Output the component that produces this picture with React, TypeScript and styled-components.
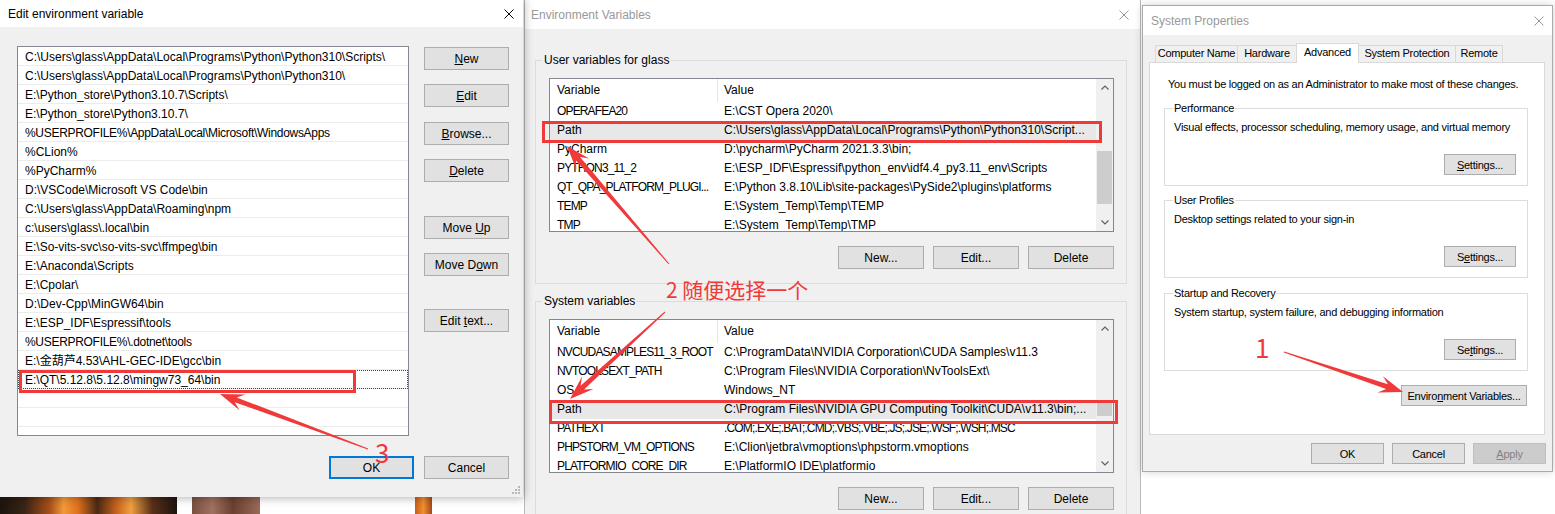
import React from "react";
import styled, { createGlobalStyle, css } from "styled-components";

const FONT = `"Liberation Sans", Arial, "Noto Sans CJK SC", sans-serif`;
const CJK = `"Noto Sans CJK SC", "Liberation Sans", sans-serif`;
const RED = "#f03a3a";

const GlobalStyle = createGlobalStyle`
  * { box-sizing: border-box; }
  html, body { margin: 0; padding: 0; background: #ffffff; }
  body { font-family: ${FONT}; font-size: 12px; color: #000; }
`;

const Desktop = styled.div`
  position: relative;
  width: 1555px;
  height: 514px;
  overflow: hidden;
  background: #ffffff;
  font-family: ${FONT};
  font-size: 12px;
  color: #000;
`;

/* ---------- desktop wallpaper strip under the left dialog ---------- */
const Wallpaper = styled.div`
  position: absolute;
  left: 0;
  top: 497px;
  width: 530px;
  height: 17px;
  display: flex;
`;
const WallPiece = styled.div<{ $w: number; $bg: string }>`
  flex: none;
  width: ${(p) => p.$w}px;
  height: 100%;
  background: ${(p) => p.$bg};
`;

/* ---------- shared window parts ---------- */
const TitleBar = styled.div<{ $h: number; $pl: number; $pr: number; $inactive?: boolean }>`
  flex: none;
  height: ${(p) => p.$h}px;
  background: #ffffff;
  display: flex;
  align-items: center;
  justify-content: space-between;
  padding: 0 ${(p) => p.$pr}px 0 ${(p) => p.$pl}px;
  color: ${(p) => (p.$inactive ? "#999999" : "#000000")};
  font-size: 12px;
  letter-spacing: 0;
`;

const CloseIcon = ({ color }: { color: string }) => (
  <svg width="10" height="10" viewBox="0 0 10 10">
    <path d="M0.5 0.5 L9.5 9.5 M9.5 0.5 L0.5 9.5" stroke={color} strokeWidth="1" fill="none" />
  </svg>
);

const Btn = styled.button<{ $w: number; $h: number; $mt?: number; $primary?: boolean }>`
  flex: none;
  width: ${(p) => p.$w}px;
  height: ${(p) => p.$h}px;
  margin: ${(p) => p.$mt ?? 0}px 0 0 0;
  padding: 0;
  background: #e1e1e1;
  border: 1px solid #adadad;
  font-family: inherit;
  font-size: inherit;
  letter-spacing: inherit;
  color: #000;
  text-align: center;
  white-space: nowrap;
  ${(p) =>
    p.$primary &&
    css`
      border: 2px solid #0078d7;
    `}
  &:disabled {
    background: #cccccc;
    border-color: #bfbfbf;
    color: #838383;
  }
`;

const Mn = styled.span`
  text-decoration: underline;
  text-underline-offset: 1px;
`;

/* ---------- Edit environment variable dialog ---------- */
const EditWindow = styled.div`
  position: absolute;
  left: 0;
  top: 0;
  width: 523px;
  height: 497px;
  z-index: 3;
  display: flex;
  flex-direction: column;
  background: #f0f0f0;
  box-shadow: 0 0 9px 1px rgba(0, 0, 0, 0.3);
`;
const EditBody = styled.div`
  position: relative;
  flex: 1;
  display: flex;
  flex-direction: column;
  padding: 19px 14px 0 17px;
`;
const EditMain = styled.div`
  display: flex;
  align-items: flex-start;
  gap: 15px;
`;
const PathList = styled.div`
  flex: none;
  width: 392px;
  height: 390px;
  border: 1px solid #828790;
  background: #ffffff;
  overflow: hidden;
`;
const PathRow = styled.div<{ $focused?: boolean; $tight?: boolean }>`
  height: 19px;
  padding: 2px 0 0 7px;
  line-height: 16px;
  border-bottom: 1px solid #ececec;
  white-space: nowrap;
  letter-spacing: ${(p) => (p.$tight ? "-0.3px" : "0")};
  ${(p) =>
    p.$focused &&
    css`
      outline: 1px dotted #444;
      outline-offset: -1px;
    `}
`;
const SideButtons = styled.div`
  flex: none;
  width: 85px;
  display: flex;
  flex-direction: column;
  padding-top: 1px;
`;
const EditFooter = styled.div`
  display: flex;
  justify-content: flex-end;
  gap: 10px;
  margin-top: 20px;
`;
const Grip = styled.svg`
  position: absolute;
  right: 3px;
  bottom: 3px;
`;

/* ---------- Environment Variables window ---------- */
const EnvWindow = styled.div`
  position: absolute;
  left: 524px;
  top: -1px;
  width: 617px;
  height: 540px;
  z-index: 1;
  display: flex;
  flex-direction: column;
  background: #f0f0f0;
  border: 1px solid #b9b9b9;
`;
const EnvBody = styled.div`
  flex: 1;
  display: flex;
  flex-direction: column;
  padding-top: 24px;
`;
const EnvGroup = styled.fieldset<{ $mt: number }>`
  min-width: 0;
  margin: ${(p) => p.$mt}px 13px 0 10px;
  padding: 11px 12px 14px 13px;
  border: 1px solid #dcdcdc;
`;
const EnvLegend = styled.legend`
  padding: 0 2px;
  margin-left: -7px;
  line-height: 14px;
  font-size: 12px;
`;
const ListFrame = styled.div`
  height: 154px;
  border: 1px solid #828790;
  background: #ffffff;
  display: flex;
`;
const ListGrid = styled.div`
  flex: 1;
  min-width: 0;
  overflow: hidden;
`;
const ListHeader = styled.div`
  display: flex;
  height: 23px;
`;
const HeadCell = styled.div<{ $w?: number }>`
  ${(p) =>
    p.$w
      ? css`
          flex: none;
          width: ${p.$w}px;
          border-right: 1px solid #e5e5e5;
          padding-left: 7px;
        `
      : css`
          flex: 1;
          padding-left: 6px;
        `}
  line-height: 23px;
  white-space: nowrap;
`;
const VarRow = styled.div<{ $selected?: boolean }>`
  display: flex;
  height: 19px;
  line-height: 19px;
  background: ${(p) => (p.$selected ? "#e8e8e8" : "transparent")};
`;
const VarCell = styled.div<{ $w?: number; $caps?: boolean }>`
  ${(p) =>
    p.$w
      ? css`
          flex: none;
          width: ${p.$w}px;
          padding-left: 7px;
        `
      : css`
          flex: 1;
          padding-left: 6px;
        `}
  letter-spacing: ${(p) => (p.$caps ? "-0.85px" : "0")};
  white-space: nowrap;
  overflow: hidden;
`;
const ScrollBar = styled.div`
  flex: none;
  width: 17px;
  background: #f0f0f0;
  display: flex;
  flex-direction: column;
`;
const ScrollArrow = styled.div`
  flex: none;
  height: 17px;
  display: flex;
  align-items: center;
  justify-content: center;
`;
const ScrollTrack = styled.div`
  flex: 1;
`;
const ScrollThumb = styled.div<{ $top: number; $h: number }>`
  margin: ${(p) => p.$top}px 1px 0;
  height: ${(p) => p.$h}px;
  background: #cdcdcd;
`;
const ButtonRow = styled.div<{ $gap: number; $mt: number; $mr?: number }>`
  display: flex;
  justify-content: flex-end;
  gap: ${(p) => p.$gap}px;
  margin-top: ${(p) => p.$mt}px;
  margin-right: ${(p) => p.$mr ?? 0}px;
`;

/* ---------- System Properties window ---------- */
const SysWindow = styled.div`
  position: absolute;
  left: 1142px;
  top: 5px;
  width: 411px;
  height: 467px;
  z-index: 2;
  display: flex;
  flex-direction: column;
  background: #f0f0f0;
  border: 1px solid #aaaaaa;
  box-shadow: 0 0 8px rgba(0, 0, 0, 0.18);
`;
const SysBody = styled.div`
  flex: 1;
  display: flex;
  flex-direction: column;
  padding: 8px 6px 0 6px;
  font-size: 11px;
  letter-spacing: -0.25px;
`;
const TabStrip = styled.div`
  display: flex;
  align-items: flex-end;
  height: 19px;
  padding-left: 6px;
`;
const Tab = styled.div<{ $w: number; $active?: boolean }>`
  position: relative;
  flex: none;
  width: ${(p) => p.$w}px;
  height: ${(p) => (p.$active ? 20 : 17)}px;
  margin-left: -1px;
  margin-bottom: ${(p) => (p.$active ? -1 : 0)}px;
  z-index: ${(p) => (p.$active ? 1 : 0)};
  border: 1px solid #d9d9d9;
  border-bottom: none;
  background: ${(p) => (p.$active ? "#ffffff" : "#f0f0f0")};
  text-align: center;
  line-height: ${(p) => (p.$active ? 16 : 15)}px;
  white-space: nowrap;
  &:first-child {
    margin-left: 0;
  }
`;
const TabPanel = styled.div`
  flex: none;
  height: 373px;
  margin-right: 1px;
  background: #ffffff;
  border: 1px solid #d9d9d9;
  display: flex;
  flex-direction: column;
  padding: 14px 16px 0 14px;
`;
const Notice = styled.div`
  margin-left: 4px;
  line-height: 14px;
  white-space: nowrap;
`;
const SysGroup = styled.fieldset<{ $mt: number }>`
  min-width: 0;
  margin: ${(p) => p.$mt}px 0 0 0;
  padding: 5px 11px 10px 9px;
  border: 1px solid #dcdcdc;
  display: flex;
  flex-direction: column;
`;
const SysLegend = styled.legend`
  padding: 0 1px;
  margin-left: -1px;
  line-height: 14px;
`;
const GroupText = styled.div`
  line-height: 14px;
  white-space: nowrap;
`;
const SysFooter = styled.div`
  display: flex;
  justify-content: flex-end;
  gap: 8px;
  margin-top: 8px;
`;

/* ---------- annotations ---------- */
const Overlay = styled.svg`
  position: absolute;
  left: 0;
  top: 0;
  z-index: 10;
  pointer-events: none;
`;
const RedBox = styled.div<{ $x: number; $y: number; $w: number; $h: number }>`
  position: absolute;
  left: ${(p) => p.$x}px;
  top: ${(p) => p.$y}px;
  width: ${(p) => p.$w}px;
  height: ${(p) => p.$h}px;
  border: 3px solid ${RED};
  z-index: 9;
  pointer-events: none;
`;
const Note = styled.div<{ $x: number; $y: number; $size: number }>`
  position: absolute;
  left: ${(p) => p.$x}px;
  top: ${(p) => p.$y}px;
  z-index: 10;
  font-family: ${CJK};
  font-size: ${(p) => p.$size}px;
  line-height: 1;
  color: ${RED};
  white-space: nowrap;
`;

function arrowPoints(tx: number, ty: number, px: number, py: number) {
  const head = 24;
  const wing = 8.5;
  const neck = 2.6;
  const tail = 0.5;
  const dx = px - tx;
  const dy = py - ty;
  const L = Math.hypot(dx, dy);
  const ux = dx / L;
  const uy = dy / L;
  const nx = -uy;
  const ny = ux;
  const bx = px - ux * head;
  const by = py - uy * head;
  const kx = px - ux * head * 0.7;
  const ky = py - uy * head * 0.7;
  const pts = [
    [tx + nx * tail, ty + ny * tail],
    [kx + nx * neck, ky + ny * neck],
    [bx + nx * wing, by + ny * wing],
    [px, py],
    [bx - nx * wing, by - ny * wing],
    [kx - nx * neck, ky - ny * neck],
    [tx - nx * tail, ty - ny * tail],
  ];
  return pts.map((p) => `${p[0].toFixed(1)},${p[1].toFixed(1)}`).join(" ");
}

const isCaps = (s: string) => /[A-Z]{3,}/.test(s) && s === s.toUpperCase();

/* ---------- data ---------- */
const pathEntries = [
  "C:\\Users\\glass\\AppData\\Local\\Programs\\Python\\Python310\\Scripts\\",
  "C:\\Users\\glass\\AppData\\Local\\Programs\\Python\\Python310\\",
  "E:\\Python_store\\Python3.10.7\\Scripts\\",
  "E:\\Python_store\\Python3.10.7\\",
  "%USERPROFILE%\\AppData\\Local\\Microsoft\\WindowsApps",
  "%CLion%",
  "%PyCharm%",
  "D:\\VSCode\\Microsoft VS Code\\bin",
  "C:\\Users\\glass\\AppData\\Roaming\\npm",
  "c:\\users\\glass\\.local\\bin",
  "E:\\So-vits-svc\\so-vits-svc\\ffmpeg\\bin",
  "E:\\Anaconda\\Scripts",
  "E:\\Cpolar\\",
  "D:\\Dev-Cpp\\MinGW64\\bin",
  "E:\\ESP_IDF\\Espressif\\tools",
  "%USERPROFILE%\\.dotnet\\tools",
  "E:\\金葫芦4.53\\AHL-GEC-IDE\\gcc\\bin",
  "E:\\QT\\5.12.8\\5.12.8\\mingw73_64\\bin",
  "",
  "",
  "",
];

type Var = { name: string; value: string; selected?: boolean };
const userVars: Var[] = [
  { name: "OPERAFEA20", value: "E:\\CST Opera 2020\\" },
  { name: "Path", value: "C:\\Users\\glass\\AppData\\Local\\Programs\\Python\\Python310\\Script...", selected: true },
  { name: "PyCharm", value: "D:\\pycharm\\PyCharm 2021.3.3\\bin;" },
  { name: "PYTHON3_11_2", value: "E:\\ESP_IDF\\Espressif\\python_env\\idf4.4_py3.11_env\\Scripts" },
  { name: "QT_QPA_PLATFORM_PLUGI...", value: "E:\\Python 3.8.10\\Lib\\site-packages\\PySide2\\plugins\\platforms" },
  { name: "TEMP", value: "E:\\System_Temp\\Temp\\TEMP" },
  { name: "TMP", value: "E:\\System_Temp\\Temp\\TMP" },
];
const systemVars: Var[] = [
  { name: "NVCUDASAMPLES11_3_ROOT", value: "C:\\ProgramData\\NVIDIA Corporation\\CUDA Samples\\v11.3" },
  { name: "NVTOOLSEXT_PATH", value: "C:\\Program Files\\NVIDIA Corporation\\NvToolsExt\\" },
  { name: "OS", value: "Windows_NT" },
  { name: "Path", value: "C:\\Program Files\\NVIDIA GPU Computing Toolkit\\CUDA\\v11.3\\bin;...", selected: true },
  { name: "PATHEXT", value: ".COM;.EXE;.BAT;.CMD;.VBS;.VBE;.JS;.JSE;.WSF;.WSH;.MSC" },
  { name: "PHPSTORM_VM_OPTIONS", value: "E:\\Clion\\jetbra\\vmoptions\\phpstorm.vmoptions" },
  { name: "PLATFORMIO_CORE_DIR", value: "E:\\PlatformIO IDE\\platformio" },
];

const Chevron = ({ up }: { up?: boolean }) => (
  <svg width="8" height="5" viewBox="0 0 8 5">
    <polyline
      points={up ? "0.5,4.5 4,1 7.5,4.5" : "0.5,0.5 4,4 7.5,0.5"}
      stroke="#606060"
      strokeWidth="1.2"
      fill="none"
    />
  </svg>
);

const VarTable = ({ vars, thumbTop, thumbH }: { vars: Var[]; thumbTop: number; thumbH: number }) => (
  <ListFrame>
    <ListGrid>
      <ListHeader>
        <HeadCell $w={168}>Variable</HeadCell>
        <HeadCell>Value</HeadCell>
      </ListHeader>
      {vars.map((v) => (
        <VarRow key={v.name} $selected={v.selected}>
          <VarCell $w={168} $caps={isCaps(v.name)}>
            {v.name}
          </VarCell>
          <VarCell $caps={isCaps(v.value)}>{v.value}</VarCell>
        </VarRow>
      ))}
    </ListGrid>
    <ScrollBar>
      <ScrollArrow>
        <Chevron up />
      </ScrollArrow>
      <ScrollTrack>
        <ScrollThumb $top={thumbTop} $h={thumbH} />
      </ScrollTrack>
      <ScrollArrow>
        <Chevron />
      </ScrollArrow>
    </ScrollBar>
  </ListFrame>
);

export default function App() {
  return (
    <Desktop>
      <GlobalStyle />

      <Wallpaper>
        <WallPiece
          $w={177}
          $bg="linear-gradient(90deg,#1c140e 0%,#3b2414 14%,#a8501a 28%,#f29a3a 36%,#e0701e 44%,#4a2a14 55%,#c8641e 66%,#f0a040 74%,#5a3018 86%,#1c140e 100%)"
        />
        <WallPiece $w={15} $bg="#ffffff" />
        <WallPiece $w={68} $bg="linear-gradient(90deg,#7a5040,#a07060 30%,#6a4030 60%,#9a6a58)" />
        <WallPiece $w={155} $bg="#ffffff" />
        <WallPiece $w={17} $bg="linear-gradient(90deg,#c85a18,#f09030,#a04818)" />
        <WallPiece $w={98} $bg="#ffffff" />
      </Wallpaper>

      {/* Environment Variables */}
      <EnvWindow>
        <TitleBar $h={29} $pl={6} $pr={11} $inactive>
          <span>Environment Variables</span>
          <CloseIcon color="#999999" />
        </TitleBar>
        <EnvBody>
          <EnvGroup $mt={0}>
            <EnvLegend>User variables for glass</EnvLegend>
            <VarTable vars={userVars} thumbTop={55} thumbH={53} />
            <ButtonRow $gap={9} $mt={14}>
              <Btn $w={86} $h={23}>New...</Btn>
              <Btn $w={86} $h={23}>Edit...</Btn>
              <Btn $w={86} $h={23}>Delete</Btn>
            </ButtonRow>
          </EnvGroup>
          <EnvGroup $mt={10}>
            <EnvLegend>System variables</EnvLegend>
            <VarTable vars={systemVars} thumbTop={64} thumbH={15} />
            <ButtonRow $gap={9} $mt={14}>
              <Btn $w={86} $h={23}>New...</Btn>
              <Btn $w={86} $h={23}>Edit...</Btn>
              <Btn $w={86} $h={23}>Delete</Btn>
            </ButtonRow>
          </EnvGroup>
        </EnvBody>
      </EnvWindow>

      {/* System Properties */}
      <SysWindow>
        <TitleBar $h={29} $pl={8} $pr={8} $inactive>
          <span>System Properties</span>
          <CloseIcon color="#999999" />
        </TitleBar>
        <SysBody>
          <TabStrip>
            <Tab $w={83}>Computer Name</Tab>
            <Tab $w={60}>Hardware</Tab>
            <Tab $w={63} $active>
              Advanced
            </Tab>
            <Tab $w={98}>System Protection</Tab>
            <Tab $w={48}>Remote</Tab>
          </TabStrip>
          <TabPanel>
            <Notice>You must be logged on as an Administrator to make most of these changes.</Notice>
            <SysGroup $mt={10}>
              <SysLegend>Performance</SysLegend>
              <GroupText>Visual effects, processor scheduling, memory usage, and virtual memory</GroupText>
              <ButtonRow $gap={0} $mt={20}>
                <Btn $w={72} $h={21}>
                  <Mn>S</Mn>ettings...
                </Btn>
              </ButtonRow>
            </SysGroup>
            <SysGroup $mt={7}>
              <SysLegend>User Profiles</SysLegend>
              <GroupText>Desktop settings related to your sign-in</GroupText>
              <ButtonRow $gap={0} $mt={20}>
                <Btn $w={72} $h={21}>
                  S<Mn>e</Mn>ttings...
                </Btn>
              </ButtonRow>
            </SysGroup>
            <SysGroup $mt={8}>
              <SysLegend>Startup and Recovery</SysLegend>
              <GroupText>System startup, system failure, and debugging information</GroupText>
              <ButtonRow $gap={0} $mt={20}>
                <Btn $w={72} $h={21}>
                  Se<Mn>t</Mn>tings...
                </Btn>
              </ButtonRow>
            </SysGroup>
            <ButtonRow $gap={0} $mt={14} $mr={1}>
              <Btn $w={126} $h={21}>
                Enviro<Mn>n</Mn>ment Variables...
              </Btn>
            </ButtonRow>
          </TabPanel>
          <SysFooter>
            <Btn $w={73} $h={21}>OK</Btn>
            <Btn $w={73} $h={21}>Cancel</Btn>
            <Btn $w={73} $h={21} disabled>
              <Mn>A</Mn>pply
            </Btn>
          </SysFooter>
        </SysBody>
      </SysWindow>

      {/* Edit environment variable */}
      <EditWindow>
        <TitleBar $h={27} $pl={8} $pr={9}>
          <span>Edit environment variable</span>
          <CloseIcon color="#000000" />
        </TitleBar>
        <EditBody>
          <EditMain>
            <PathList>
              {pathEntries.map((p, i) => (
                <PathRow key={i} $focused={i === 17} $tight={/[A-Z]{4,}/.test(p)}>
                  {p}
                </PathRow>
              ))}
            </PathList>
            <SideButtons>
              <Btn $w={85} $h={23}>
                <Mn>N</Mn>ew
              </Btn>
              <Btn $w={85} $h={23} $mt={14}>
                <Mn>E</Mn>dit
              </Btn>
              <Btn $w={85} $h={23} $mt={15}>
                <Mn>B</Mn>rowse...
              </Btn>
              <Btn $w={85} $h={23} $mt={14}>
                <Mn>D</Mn>elete
              </Btn>
              <Btn $w={85} $h={23} $mt={34}>
                Move <Mn>U</Mn>p
              </Btn>
              <Btn $w={85} $h={23} $mt={14}>
                Move D<Mn>o</Mn>wn
              </Btn>
              <Btn $w={85} $h={23} $mt={33}>
                Edit <Mn>t</Mn>ext...
              </Btn>
            </SideButtons>
          </EditMain>
          <EditFooter>
            <Btn $w={85} $h={23} $primary>
              OK
            </Btn>
            <Btn $w={85} $h={23}>Cancel</Btn>
          </EditFooter>
          <Grip width="8" height="8" viewBox="0 0 8 8">
            <g fill="#b8b8b8">
              <rect x="6" y="0" width="2" height="2" />
              <rect x="3" y="3" width="2" height="2" />
              <rect x="6" y="3" width="2" height="2" />
              <rect x="0" y="6" width="2" height="2" />
              <rect x="3" y="6" width="2" height="2" />
              <rect x="6" y="6" width="2" height="2" />
            </g>
          </Grip>
        </EditBody>
      </EditWindow>

      {/* annotations */}
      <RedBox $x={19} $y={370} $w={337} $h={23} />
      <RedBox $x={542} $y={121} $w={560} $h={22} />
      <RedBox $x={549} $y={400} $w={569} $h={24} />

      <Overlay width="1555" height="514" viewBox="0 0 1555 514">
        <g fill={RED}>
          <polygon points={arrowPoints(1284, 352, 1403, 392)} />
          <polygon points={arrowPoints(669, 264, 567, 146)} />
          <polygon points={arrowPoints(665, 312, 570, 399)} />
          <polygon points={arrowPoints(368, 449, 220, 394)} />
        </g>
      </Overlay>

      <Note $x={1255} $y={334} $size={26}>
        1
      </Note>
      <Note $x={666} $y={279} $size={21}>
        2 随便选择一个
      </Note>
      <Note $x={375} $y={439} $size={26}>
        3
      </Note>
    </Desktop>
  );
}
